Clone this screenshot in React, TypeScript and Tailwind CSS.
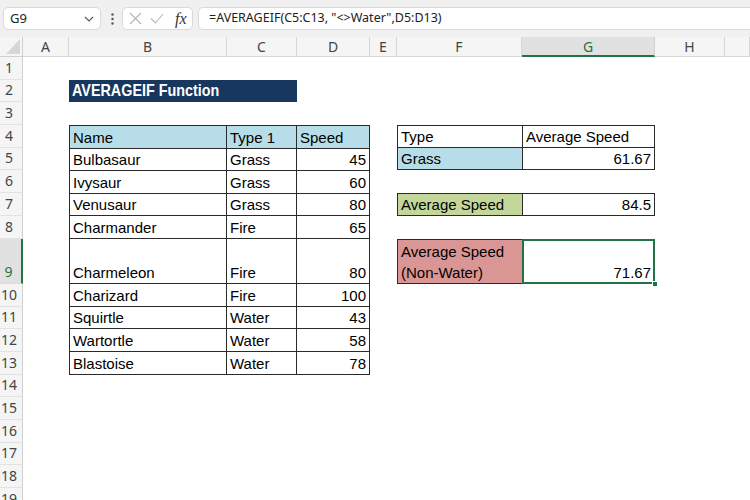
import React from 'react';

const COLS = [
  { label: 'A', cls: 'col-start-2' },
  { label: 'B', cls: 'col-start-3' },
  { label: 'C', cls: 'col-start-4' },
  { label: 'D', cls: 'col-start-5' },
  { label: 'E', cls: 'col-start-6' },
  { label: 'F', cls: 'col-start-7' },
  { label: 'G', cls: 'col-start-8', active: true },
  { label: 'H', cls: 'col-start-9' },
  { label: '', cls: 'col-start-10' },
];

const ROWS = [
  'row-start-2', 'row-start-3', 'row-start-4', 'row-start-5', 'row-start-6',
  'row-start-7', 'row-start-8', 'row-start-9', 'row-start-10', 'row-start-11',
  'row-start-12', 'row-start-13', 'row-start-14', 'row-start-15', 'row-start-16',
  'row-start-17', 'row-start-18', 'row-start-19', 'row-start-20',
];

const POKEMON = [
  { name: 'Bulbasaur', type: 'Grass', speed: 45 },
  { name: 'Ivysaur', type: 'Grass', speed: 60 },
  { name: 'Venusaur', type: 'Grass', speed: 80 },
  { name: 'Charmander', type: 'Fire', speed: 65 },
  { name: 'Charmeleon', type: 'Fire', speed: 80 },
  { name: 'Charizard', type: 'Fire', speed: 100 },
  { name: 'Squirtle', type: 'Water', speed: 43 },
  { name: 'Wartortle', type: 'Water', speed: 58 },
  { name: 'Blastoise', type: 'Water', speed: 78 },
];

const cell = 'flex items-end border-r border-b border-[#2a2a2a] px-[3px] leading-[21px]';

export default function App() {
  return (
    <div className="h-[500px] w-[750px] overflow-hidden bg-white font-['Liberation_Sans',Arial,sans-serif] text-[15px] text-black">
      {/* ── Formula bar ───────────────────────────────────────────── */}
      <div className="flex h-[37px] items-start bg-[#f0f0f0] pl-[3px] pt-[7px] font-['Noto_Sans',sans-serif] text-[13px] text-[#222]">
        <div className="flex h-[23px] w-[98px] items-center justify-between rounded-[5px] border border-[#dadada] bg-white pl-[6px] pr-[6px]">
          <span>G9</span>
          <svg width="10" height="6" viewBox="0 0 10 6" fill="none" stroke="#555" strokeWidth="1.1">
            <path d="M1 1l4 4 4-4" />
          </svg>
        </div>
        <div className="ml-[3px] flex h-[23px] w-[16px] items-center justify-center">
          <svg width="3" height="12" viewBox="0 0 3 12" fill="#555">
            <circle cx="1.5" cy="1.5" r="1.2" />
            <circle cx="1.5" cy="6" r="1.2" />
            <circle cx="1.5" cy="10.5" r="1.2" />
          </svg>
        </div>
        <div className="ml-[2px] flex h-[23px] w-[71px] items-center gap-[8px] rounded-[5px] border border-[#dadada] bg-white pl-[6px]">
          <svg width="13" height="13" viewBox="0 0 13 13" fill="none" stroke="#b5b5b5" strokeWidth="1.1">
            <path d="M1 1l11 11M12 1L1 12" />
          </svg>
          <svg width="14" height="11" viewBox="0 0 14 11" fill="none" stroke="#b5b5b5" strokeWidth="1.1">
            <path d="M1 5.5l4.5 4.5L13 1" />
          </svg>
          <span className="ml-[3px] font-['Liberation_Serif',serif] text-[16px] italic leading-none text-[#333]">fx</span>
        </div>
        <div className="ml-[5px] flex h-[23px] flex-1 items-center rounded-l-[5px] border border-r-0 border-[#dadada] bg-white pl-[10px] text-[12.5px]">
          =AVERAGEIF(C5:C13, "&lt;&gt;Water",D5:D13)
        </div>
      </div>

      {/* ── Sheet grid ────────────────────────────────────────────── */}
      <div className="grid grid-cols-[23px_46px_158px_70px_73px_27px_125px_133px_70px_1fr] grid-rows-[20px_repeat(8,22.7px)_45.4px_repeat(10,22.7px)]">
        {/* corner */}
        <div className="col-start-1 row-start-1 flex items-end justify-end border-r border-b border-[#d0d0d0] bg-[#f5f5f5] pb-[2px] pr-[2px]">
          <svg width="14" height="15" viewBox="0 0 14 15">
            <path d="M14 0v15H0z" fill="#d6d6d6" />
          </svg>
        </div>

        {COLS.map(c => (
          <div
            key={c.cls}
            className={`${c.cls} row-start-1 flex items-center justify-center font-['Noto_Sans',sans-serif] text-[14px] ${
              c.active
                ? 'border-b-2 border-r border-b-[#217346] border-r-[#d0d0d0] bg-[#e1e1e1] text-[#217346]'
                : 'border-r border-b border-[#d6d6d6] bg-[#f5f5f5] text-[#444]'
            }`}
          >
            {c.label}
          </div>
        ))}

        {ROWS.map((r, i) => (
          <div
            key={r}
            className={`${r} col-start-1 flex items-end justify-center pb-[1px] pr-[4px] font-['Noto_Sans',sans-serif] text-[14px] leading-[20px] ${
              i === 8
                ? 'border-r-2 border-b border-r-[#217346] border-b-[#dcdcdc] bg-[#e1e1e1] text-[#217346]'
                : 'border-r border-b border-r-[#d0d0d0] border-b-[#e3e3e3] bg-[#f5f5f5] text-[#444]'
            }`}
          >
            {i + 1}
          </div>
        ))}

        {/* title */}
        <div className="col-start-3 col-end-5 row-start-3 flex items-center overflow-hidden bg-[#17375e] pl-[3px] text-[17px] font-bold text-white">
          <span className="origin-left scale-x-[0.845] whitespace-nowrap">AVERAGEIF Function</span>
        </div>

        {/* data table */}
        <div className="col-start-3 col-end-6 row-start-5 row-end-15 border-l border-t border-[#2a2a2a]">
          <div className="grid h-full grid-cols-[157px_70px_1fr] grid-rows-[repeat(5,1fr)_2fr_repeat(4,1fr)]">
            <div className={`${cell} bg-[#b7dee8]`}>Name</div>
            <div className={`${cell} bg-[#b7dee8]`}>Type 1</div>
            <div className={`${cell} bg-[#b7dee8]`}>Speed</div>
            {POKEMON.map(p => (
              <React.Fragment key={p.name}>
                <div className={cell}>{p.name}</div>
                <div className={cell}>{p.type}</div>
                <div className={`${cell} justify-end`}>{p.speed}</div>
              </React.Fragment>
            ))}
          </div>
        </div>

        {/* lookup */}
        <div className="col-start-7 col-end-9 row-start-5 row-end-7 border-l border-t border-[#2a2a2a]">
          <div className="grid h-full grid-cols-[125px_1fr] grid-rows-2">
            <div className={cell}>Type</div>
            <div className={cell}>Average Speed</div>
            <div className={`${cell} bg-[#b7dee8]`}>Grass</div>
            <div className={`${cell} justify-end`}>61.67</div>
          </div>
        </div>

        <div className="col-start-7 col-end-9 row-start-8 border-l border-t border-[#2a2a2a]">
          <div className="grid h-full grid-cols-[125px_1fr]">
            <div className={`${cell} bg-[#c4d79b]`}>Average Speed</div>
            <div className={`${cell} justify-end`}>84.5</div>
          </div>
        </div>

        <div className="col-start-7 col-end-9 row-start-10 border-l border-t border-[#2a2a2a]">
          <div className="grid h-full grid-cols-[125px_1fr]">
            <div className={`${cell} bg-[#da9694]`}>
              <span>Average Speed<br />(Non-Water)</span>
            </div>
            <div className={`${cell} relative justify-end`}>
              71.67
              <div className="absolute -top-[1px] -left-[1px] -right-[1px] -bottom-[1px] border-2 border-[#217346]" />
              <div className="absolute -right-[4px] -bottom-[4px] h-[6px] w-[6px] border border-white bg-[#217346]" />
            </div>
          </div>
        </div>
      </div>
    </div>
  );
}
